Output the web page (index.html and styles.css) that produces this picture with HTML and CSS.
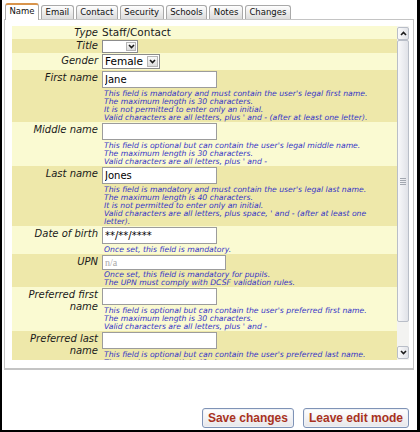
FILE: index.html
```html
<!DOCTYPE html>
<html lang="en">
<head>
<meta charset="utf-8">
<title>Edit user</title>
<link rel="stylesheet" href="styles.css">
</head>
<body>
<div class="frame">
  <div class="tabs">
    <div class="tab active">Name</div>
    <div class="tab">Email</div>
    <div class="tab">Contact</div>
    <div class="tab">Security</div>
    <div class="tab">Schools</div>
    <div class="tab">Notes</div>
    <div class="tab">Changes</div>
  </div>

  <div class="panel">
    <div class="scroller">
      <div class="viewport">
        <table class="form">
          <tr class="light type">
            <th>Type</th>
            <td>Staff/Contact</td>
          </tr>
          <tr class="dark pick">
            <th>Title</th>
            <td>
              <div class="select title">
                <span class="select-value"></span>
                <span class="select-arrow"><svg width="7" height="5" viewBox="0 0 7 5"><path d="M1 1 L3.5 3.5 L6 1" fill="none" stroke="#1c1c1c" stroke-width="1.6"/></svg></span>
              </div>
            </td>
          </tr>
          <tr class="light pick gender">
            <th>Gender</th>
            <td>
              <div class="select wide">
                <span class="select-value">Female</span>
                <span class="select-arrow"><svg width="7" height="5" viewBox="0 0 7 5"><path d="M1 1 L3.5 3.5 L6 1" fill="none" stroke="#1c1c1c" stroke-width="1.6"/></svg></span>
              </div>
            </td>
          </tr>
          <tr class="dark">
            <th>First name</th>
            <td>
              <input class="field" type="text" value="Jane">
              <div class="help">This field is mandatory and must contain the user's legal first name.<br>The maximum length is 30 characters.<br>It is not permitted to enter only an initial.<br>Valid characters are all letters, plus ' and - (after at least one letter).</div>
            </td>
          </tr>
          <tr class="light">
            <th>Middle name</th>
            <td>
              <input class="field" type="text" value="">
              <div class="help">This field is optional but can contain the user's legal middle name.<br>The maximum length is 30 characters.<br>Valid characters are all letters, plus ' and -</div>
            </td>
          </tr>
          <tr class="dark">
            <th>Last name</th>
            <td>
              <input class="field" type="text" value="Jones">
              <div class="help">This field is mandatory and must contain the user's legal last name.<br>The maximum length is 40 characters.<br>It is not permitted to enter only an initial.<br>Valid characters are all letters, plus space, ' and - (after at least one letter).</div>
            </td>
          </tr>
          <tr class="light">
            <th>Date of birth</th>
            <td>
              <input class="field" type="text" value="**/**/****">
              <div class="help">Once set, this field is mandatory.</div>
            </td>
          </tr>
          <tr class="dark upn">
            <th>UPN</th>
            <td>
              <input class="field" type="text" placeholder="n/a">
              <div class="help">Once set, this field is mandatory for pupils.<br>The UPN must comply with DCSF validation rules.</div>
            </td>
          </tr>
          <tr class="light">
            <th>Preferred first name</th>
            <td>
              <input class="field" type="text" value="">
              <div class="help">This field is optional but can contain the user's preferred first name.<br>The maximum length is 30 characters.<br>Valid characters are all letters, plus ' and -</div>
            </td>
          </tr>
          <tr class="dark">
            <th>Preferred last name</th>
            <td>
              <input class="field" type="text" value="">
              <div class="help">This field is optional but can contain the user's preferred last name.<br>The maximum length is 40 characters.<br>Valid characters are all letters, plus ' and -</div>
            </td>
          </tr>
        </table>
      </div>

      <div class="scrollbar">
        <div class="sb-btn up"><svg width="7" height="5" viewBox="0 0 7 5"><path d="M1 4 L3.5 1.5 L6 4" fill="none" stroke="#1c1c1c" stroke-width="1.6"/></svg></div>
        <div class="sb-track">
          <div class="sb-thumb"><span class="grip"></span></div>
        </div>
        <div class="sb-btn down"><svg width="7" height="5" viewBox="0 0 7 5"><path d="M1 1 L3.5 3.5 L6 1" fill="none" stroke="#1c1c1c" stroke-width="1.6"/></svg></div>
      </div>
    </div>
  </div>

  <div class="actions">
    <button class="btn" type="button">Save changes</button>
    <button class="btn" type="button">Leave edit mode</button>
  </div>
</div>
</body>
</html>
```

FILE: styles.css
```css
body {
  margin: 0;
  background: #fff;
  font-family: "DejaVu Sans", Verdana, sans-serif;
  color: #1a1a1a;
}

.frame {
  box-sizing: border-box;
  width: 420px;
  height: 432px;
  border: solid #000;
  border-width: 0 3px 2px 2px;
  padding: 3px 3px 2px 2px;
  display: flex;
  flex-direction: column;
}

/* tab strip */
.tabs {
  display: flex;
  align-items: flex-start;
  gap: 2px;
  height: 16px;
  margin-left: 1px;
}

.tab {
  margin-top: 2px;
  padding: 0 3.5px;
  font-size: 8.5px;
  line-height: 13px;
  color: #111;
  border: 1px solid #a9a9a9;
  border-bottom: 0;
  border-radius: 3px 3px 0 0;
  background: linear-gradient(#fefefe, #dcdcdc);
}

.tab.active {
  margin-top: 0;
  padding-bottom: 2px;
  border-top: 2px solid #d8944c;
  background: #fff;
  position: relative;
  z-index: 1;
}

/* tab body */
.panel {
  box-sizing: border-box;
  width: 410px;
  border: 1px solid #c4c4c4;
  border-bottom-width: 2px;
  padding: 6px 4px 8px 7px;
}

.scroller {
  display: flex;
  height: 334px;
}

.viewport {
  flex: 1;
  overflow: hidden;
}

/* form table */
.form {
  width: 100%;
  border-collapse: collapse;
}

.light { background: #fafad2; }
.dark { background: #eee8aa; }

.form th {
  width: 86px;
  padding: 2px 2px 0 0;
  text-align: right;
  vertical-align: top;
  font-weight: normal;
  font-style: italic;
  font-size: 10px;
  line-height: 12px;
  color: #1a1a1a;
}

.form td {
  padding: 1px 0 0 2px;
  vertical-align: top;
}

.type th,
.type td {
  padding-top: 0;
  line-height: 13px;
}

.type td {
  font-size: 10.5px;
}

.pick th {
  padding-top: 1px;
}

.gender th {
  padding-top: 2px;
}

.gender td {
  padding-bottom: 1px;
}

.field {
  display: block;
  box-sizing: border-box;
  width: 115px;
  height: 17px;
  margin: 0;
  padding: 0 2px;
  border: 1px solid #9c9c9c;
  background: #fff;
  font-family: "DejaVu Sans", Verdana, sans-serif;
  font-size: 10px;
  color: #000;
  outline: none;
}

.upn .field {
  width: 124px;
  height: 15px;
}

.upn .field::placeholder {
  font-family: "Liberation Serif", serif;
  font-size: 10px;
  color: #a8a8a8;
}

.upn .help {
  margin-top: 1px;
}

.help {
  max-width: 275px;
  margin-top: 2px;
  padding-left: 2px;
  font-size: 7.7px;
  line-height: 8px;
  font-style: italic;
  color: #3535c6;
}

/* drop-down lists */
.select {
  display: flex;
  align-items: center;
  box-sizing: border-box;
  border: 1px solid #8c8c8c;
  background: #fff;
  font-size: 10.5px;
  color: #000;
}

.select.title {
  width: 36px;
  height: 13px;
}

.select.wide {
  width: 58px;
  height: 15px;
}

.select-value {
  flex: 1;
  padding-left: 2px;
  line-height: 13px;
  white-space: nowrap;
}

.select-arrow {
  box-sizing: border-box;
  flex: none;
  width: 10px;
  height: 9px;
  margin-right: 1px;
  display: flex;
  align-items: center;
  justify-content: center;
  border: 1px solid #b5b5b5;
  background: linear-gradient(#fafafa, #dcdcdc);
}

.wide .select-arrow {
  width: 11px;
  height: 11px;
}

/* scroll bar */
.scrollbar {
  width: 12px;
  display: flex;
  flex-direction: column;
  background: #f3f3f1;
}

.sb-btn {
  box-sizing: border-box;
  height: 13px;
  margin-top: 1px;
  display: flex;
  align-items: center;
  justify-content: center;
  border: 1px solid #b9bec8;
  border-radius: 2px;
  background: linear-gradient(to right, #fbfbfc, #e1e3e8);
}

.sb-btn.down {
  margin: 0 0 1px;
}

.sb-track {
  flex: 1;
}

.sb-thumb {
  box-sizing: border-box;
  height: 282px;
  display: flex;
  align-items: center;
  justify-content: center;
  border: 1px solid #b9bec8;
  border-radius: 2px;
  background: linear-gradient(to right, #f8f8fa, #e0e2e8);
}

.grip {
  width: 6px;
  height: 7px;
  background: repeating-linear-gradient(#a2a7b0 0 1px, transparent 1px 2px);
}

/* footer buttons */
.actions {
  margin-top: auto;
  display: flex;
  justify-content: flex-end;
  gap: 9px;
  padding-right: 5px;
}

.btn {
  box-sizing: border-box;
  height: 20px;
  margin: 0;
  padding: 0 5px;
  border: 1px solid #7f93b6;
  border-radius: 3px;
  background: linear-gradient(#ffffff, #e7e7ea);
  box-shadow: inset 0 0 0 1px #eef1f6;
  font-family: "Liberation Sans", Arial, sans-serif;
  font-weight: bold;
  font-size: 12px;
  line-height: 18px;
  color: #a8321e;
}
```
